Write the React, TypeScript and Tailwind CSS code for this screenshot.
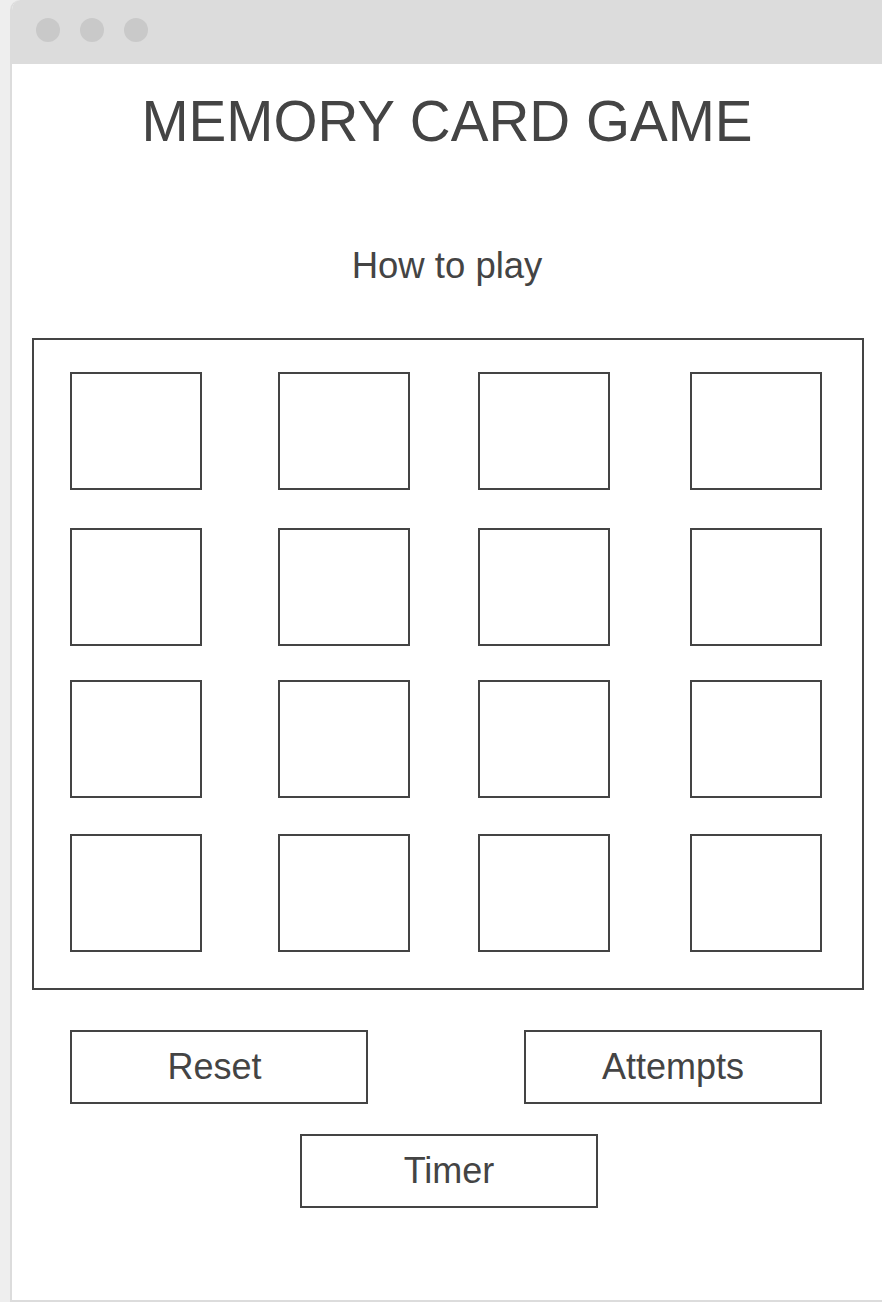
import React from "react";

const CARDS = Array.from({ length: 16 }, (_, i) => i);

function Card() {
  return <div className="w-[132px] h-[118px] border-2 border-[#444444] bg-white" />;
}

function Button({ label, className = "" }: { label: string; className?: string }) {
  return (
    <button
      type="button"
      className={`w-[298px] h-[74px] border-2 border-[#444444] bg-white flex items-center justify-center text-[36px] leading-none text-[#444444] ${className}`}
    >
      {label}
    </button>
  );
}

export default function App() {
  return (
    <div
      className="min-h-screen bg-[#eeeeee] pl-[10px]"
      style={{ fontFamily: '"Liberation Sans", Arial, sans-serif' }}
    >
      <div className="h-[1302px] bg-white border-l-2 border-b-2 border-[#dcdcdc] rounded-tl-[10px] overflow-hidden">
        {/* Browser bar */}
        <div className="h-16 bg-[#dcdcdc] flex items-center gap-5 pl-6 pb-[4px]">
          <span className="w-6 h-6 rounded-full bg-[#c9c9c9]" />
          <span className="w-6 h-6 rounded-full bg-[#c9c9c9]" />
          <span className="w-6 h-6 rounded-full bg-[#c9c9c9]" />
        </div>

        {/* Header */}
        <h1 className="mt-[30px] h-[56px] text-center text-[56.6px] leading-[56px] text-[#444444]">
          MEMORY CARD GAME
        </h1>
        <p className="mt-[98px] h-[36px] text-center text-[36.5px] leading-[36px] text-[#444444]">
          How to play
        </p>

        {/* Board */}
        <div className="mt-[54px] ml-[20px] w-[832px] h-[652px] border-2 border-[#444444] pl-[36px] pt-[32px]">
          <div className="grid grid-cols-[208px_200px_212px_132px] grid-rows-[156px_152px_154px_118px]">
            {CARDS.map((c) => (
              <Card key={c} />
            ))}
          </div>
        </div>

        {/* Controls */}
        <div className="mt-[40px] ml-[58px] flex gap-[156px]">
          <Button label="Reset" className="pr-[9px]" />
          <Button label="Attempts" />
        </div>
        <div className="mt-[30px] ml-[288px]">
          <Button label="Timer" />
        </div>
      </div>
    </div>
  );
}
